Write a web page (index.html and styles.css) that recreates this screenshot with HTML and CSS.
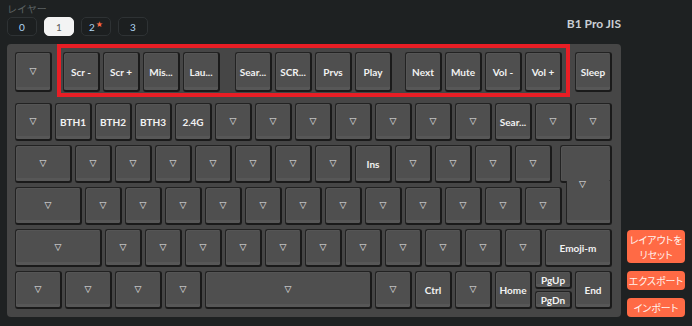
FILE: index.html
```html
<!DOCTYPE html>
<html lang="ja">
<head>
<meta charset="utf-8">
<title>B1 Pro JIS</title>
<link rel="stylesheet" href="styles.css">
</head>
<body>
<div class="app">
  <header class="top">
    <div class="layers">
      <div class="layer-label">レイヤー</div>
      <div class="layer-btns">
        <div class="lb">0</div>
        <div class="lb active">1</div>
        <div class="lb">2<span class="star">★</span></div>
        <div class="lb">3</div>
      </div>
    </div>
    <div class="title">B1 Pro JIS</div>
  </header>
  <main class="main">
    <div class="board">
      <div class="row r1">
        <div class="k"><span class="t">▽</span></div>
        <div class="grp g1">
          <div class="k">Scr -</div>
          <div class="k">Scr +</div>
          <div class="k">Mis...</div>
          <div class="k">Lau...</div>
        </div>
        <div class="grp g2">
          <div class="k">Sear...</div>
          <div class="k">SCR...</div>
          <div class="k">Prvs</div>
          <div class="k">Play</div>
        </div>
        <div class="grp g3">
          <div class="k">Next</div>
          <div class="k">Mute</div>
          <div class="k">Vol -</div>
          <div class="k">Vol +</div>
        </div>
        <div class="k g4">Sleep</div>
      </div>
      <div class="rows">
        <div class="row">
          <div class="k"><span class="t">▽</span></div>
          <div class="k">BTH1</div>
          <div class="k">BTH2</div>
          <div class="k">BTH3</div>
          <div class="k">2.4G</div>
          <div class="k"><span class="t">▽</span></div>
          <div class="k"><span class="t">▽</span></div>
          <div class="k"><span class="t">▽</span></div>
          <div class="k"><span class="t">▽</span></div>
          <div class="k"><span class="t">▽</span></div>
          <div class="k"><span class="t">▽</span></div>
          <div class="k"><span class="t">▽</span></div>
          <div class="k">Sear...</div>
          <div class="k"><span class="t">▽</span></div>
          <div class="k"><span class="t">▽</span></div>
        </div>
        <div class="r34">
          <div class="row row3">
            <div class="k w15"><span class="t">▽</span></div>
            <div class="k"><span class="t">▽</span></div>
            <div class="k"><span class="t">▽</span></div>
            <div class="k"><span class="t">▽</span></div>
            <div class="k"><span class="t">▽</span></div>
            <div class="k"><span class="t">▽</span></div>
            <div class="k"><span class="t">▽</span></div>
            <div class="k"><span class="t">▽</span></div>
            <div class="k">Ins</div>
            <div class="k"><span class="t">▽</span></div>
            <div class="k"><span class="t">▽</span></div>
            <div class="k"><span class="t">▽</span></div>
            <div class="k"><span class="t">▽</span></div>
          </div>
          <div class="row row4">
            <div class="k w175"><span class="t">▽</span></div>
            <div class="k"><span class="t">▽</span></div>
            <div class="k"><span class="t">▽</span></div>
            <div class="k"><span class="t">▽</span></div>
            <div class="k"><span class="t">▽</span></div>
            <div class="k"><span class="t">▽</span></div>
            <div class="k"><span class="t">▽</span></div>
            <div class="k"><span class="t">▽</span></div>
            <div class="k"><span class="t">▽</span></div>
            <div class="k"><span class="t">▽</span></div>
            <div class="k"><span class="t">▽</span></div>
            <div class="k"><span class="t">▽</span></div>
            <div class="k"><span class="t">▽</span></div>
          </div>
          <div class="ent-top"></div>
          <div class="ent-bot"><span class="t">▽</span></div>
        </div>
        <div class="row">
          <div class="k w225"><span class="t">▽</span></div>
          <div class="k"><span class="t">▽</span></div>
          <div class="k"><span class="t">▽</span></div>
          <div class="k"><span class="t">▽</span></div>
          <div class="k"><span class="t">▽</span></div>
          <div class="k"><span class="t">▽</span></div>
          <div class="k"><span class="t">▽</span></div>
          <div class="k"><span class="t">▽</span></div>
          <div class="k"><span class="t">▽</span></div>
          <div class="k"><span class="t">▽</span></div>
          <div class="k"><span class="t">▽</span></div>
          <div class="k"><span class="t">▽</span></div>
          <div class="k w175">Emoji-m</div>
        </div>
        <div class="row">
          <div class="k w125"><span class="t">▽</span></div>
          <div class="k w125"><span class="t">▽</span></div>
          <div class="k w125"><span class="t">▽</span></div>
          <div class="k"><span class="t">▽</span></div>
          <div class="k w425"><span class="t">▽</span></div>
          <div class="k"><span class="t">▽</span></div>
          <div class="k">Ctrl</div>
          <div class="k"><span class="t">▽</span></div>
          <div class="k">Home</div>
          <div class="stack">
            <div class="k half">PgUp</div>
            <div class="k half">PgDn</div>
          </div>
          <div class="k">End</div>
        </div>
      </div>
      <div class="highlight"></div>
    </div>
    <div class="side">
      <div class="ob tall"><span class="ln">レイアウトを</span><span class="ln">リセット</span></div>
      <div class="ob">エクスポート</div>
      <div class="ob last">インポート</div>
    </div>
  </main>
</div>
</body>
</html>
```

FILE: styles.css
```css
* { box-sizing: border-box; }
html, body { margin: 0; padding: 0; }
body {
  background: #1e2122;
  font-family: Lato, "Noto Sans", "Noto Sans CJK JP", sans-serif;
  width: 692px;
  height: 326px;
  overflow: hidden;
}
.app { padding-left: 7px; }

.top {
  width: 614px;
  height: 44px;
  display: flex;
  justify-content: space-between;
  align-items: flex-start;
}
.layer-label {
  margin-top: 3px;
  font-family: "Noto Sans CJK JP", sans-serif;
  font-size: 10px;
  line-height: 12px;
  color: #5c6163;
}
.layer-btns {
  display: flex;
  margin-top: 2px;
}
.lb {
  width: 30px;
  height: 19px;
  margin-right: 7px;
  border: 1px solid #2e3234;
  border-radius: 5px;
  background: #1c1f20;
  color: #b0d6f4;
  font-size: 10px;
  display: flex;
  align-items: center;
  justify-content: center;
}
.lb.active {
  background: #f3f3f3;
  border-color: #f3f3f3;
  color: #5a5a5a;
}
.star {
  color: #ff6b45;
  font-family: "DejaVu Sans", sans-serif;
  font-size: 8px;
  margin-left: 1px;
  position: relative;
  top: -2px;
}
.title {
  margin-top: 17px;
  font-size: 12px;
  line-height: 14px;
  font-weight: 700;
  color: #c9ced4;
}

.main {
  display: flex;
  align-items: flex-end;
}
.board {
  position: relative;
  width: 614px;
  padding: 8px 9px 8px 8px;
  background: #464646;
  border-radius: 4px;
}
.row {
  display: flex;
  gap: 3px;
  height: 38px;
}
.r1 {
  gap: 0;
  height: 40px;
  margin-bottom: 11px;
}
.grp { display: flex; gap: 3px; }
.g1 { margin-left: 11px; }
.g2 { margin-left: 15px; }
.g3 { margin-left: 13px; }
.g4 { margin-left: 13px; }

.rows {
  display: flex;
  flex-direction: column;
  gap: 4px;
}
.k, .ent-top, .ent-bot {
  background: #4f4f4f;
  border: 1px solid #222222;
  border-right: 2px solid #1a1a1a;
  border-bottom: 2px solid #1a1a1a;
  border-radius: 3px;
  box-shadow: inset 0 -3px 0 #575757, inset 1px 1px 0 #555555;
  color: #f2f2f2;
  font-size: 10px;
  font-weight: 700;
  display: flex;
  align-items: center;
  justify-content: center;
  white-space: nowrap;
}
.k { width: 37px; flex: none; }
.w125 { width: 47px; }
.w15 { width: 57px; }
.w175 { width: 67px; }
.w225 { width: 87px; }
.w425 { width: 167px; }
.t {
  font-family: "DejaVu Sans", sans-serif;
  font-size: 9px;
  font-weight: 700;
  line-height: 1;
}

.r34 {
  display: grid;
  grid-template-columns: 545px 6px 46px;
  grid-template-rows: 38px 38px;
  row-gap: 4px;
}
.row3 { grid-area: 1 / 1 / 2 / 2; }
.row4 { grid-area: 2 / 1 / 3 / 3; }
.ent-top {
  grid-area: 1 / 2 / 2 / 4;
  box-shadow: inset 1px 1px 0 #555555;
}
.ent-bot {
  grid-area: 2 / 3 / 3 / 4;
  margin-top: -6px;
  border-top: none;
  border-radius: 0 0 3px 3px;
  position: relative;
  z-index: 1;
  padding-bottom: 36px;
  box-shadow: inset 0 -3px 0 #575757;
}
.ent-bot .t { margin-left: -12px; }

.stack {
  display: flex;
  flex-direction: column;
  gap: 2px;
  width: 37px;
}
.k.half { height: 18px; }

.highlight {
  position: absolute;
  left: 50px;
  top: 0;
  width: 513px;
  height: 53px;
  border: 4px solid #e81e25;
}

.side {
  margin-left: 6px;
  width: 58px;
  display: flex;
  flex-direction: column;
}
.ob {
  background: #ff6a45;
  color: #fff3ee;
  border-radius: 4px;
  font-family: "Noto Sans CJK JP", sans-serif;
  font-feature-settings: "palt";
  font-size: 10px;
  line-height: 15px;
  height: 19px;
  margin-top: 8px;
  display: flex;
  flex-direction: column;
  align-items: center;
  justify-content: center;
  text-align: center;
  white-space: nowrap;
}
.ln { display: block; line-height: 15px; height: 15px; }
.ob.tall { height: 33px; margin-top: 0; }
```
